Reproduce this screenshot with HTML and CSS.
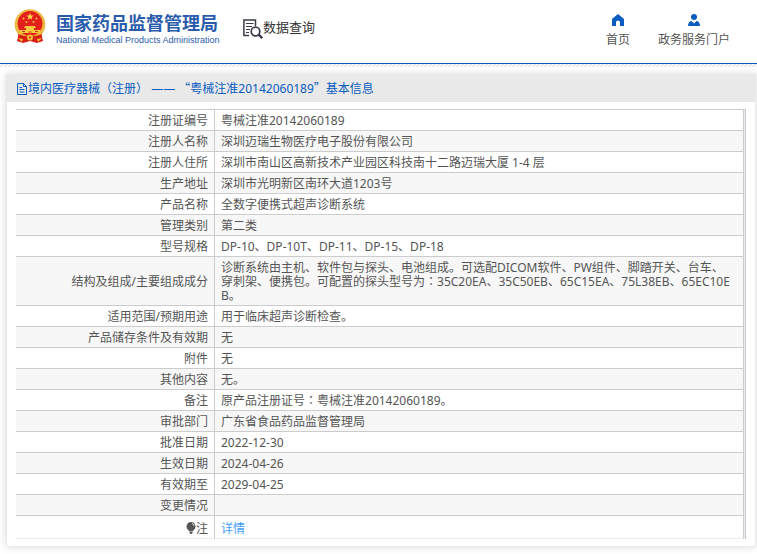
FILE: index.html
```html
<!DOCTYPE html>
<html lang="zh-CN">
  <head>
    <meta charset="UTF-8" />
    <meta name="viewport" content="width=device-width, initial-scale=1.0" />
    <title>国家药品监督管理局 - 数据查询</title>
    <link rel="stylesheet" href="styles.css">
  </head>
  <body>
    <header class="header">
      <div class="logo">
        <svg class="emblem" viewBox="0 0 32 34" aria-hidden="true">
          <path d="M5 24 L3 32 L9 34 L16 32 L23 34 L29 32 L27 24Z" fill="#d81e12" />
          <circle cx="16" cy="15.500" r="15.300" fill="#e9b13a" />
          <circle cx="16" cy="15.500" r="14" fill="none" stroke="#f6cf52" stroke-dasharray="2 1" />
          <circle cx="16" cy="14.500" r="12.400" fill="#e3201b" />
          <path d="M16 4l1 2.400 2.600.2-2 1.600.7 2.500-2.300-1.400-2.300 1.400.7-2.500-2-1.600 2.600-.2z" fill="#fbd84b" />
          <g fill="#f8c83e">
            <circle cx="9.500" cy="9.500" r="1" />
            <circle cx="12.500" cy="13" r="1" />
            <circle cx="19.500" cy="13" r="1" />
            <circle cx="22.500" cy="9.500" r="1" />
            <path d="M11 17h10l1 2H10zM12 19h8v2h-8zM6 21h20v3H6z" />
          </g>
          <path d="M8 22.500h3M14.500 23h3M21 22.500h3" stroke="#c9361b" />
          <path d="M4 25q12 5 24 0l-2 7-10-1-10 1z" fill="#d81e12" />
          <circle cx="16" cy="28.500" r="3" fill="#f2bd36" />
          <circle cx="16" cy="28.500" r="1" fill="#d81e12" />
          <path d="M4 29l5 1-1 3zM28 29l-5 1 1 3z" fill="#f2bd36" />
        </svg>
        <div class="logo-text">
          <div class="logo-cn">国家药品监督管理局</div>
          <div class="logo-en">National Medical Products Administration</div>
        </div>
      </div>
      <div class="data-query">
        <svg class="query-icon" viewBox="0 0 20 20" aria-hidden="true">
          <g fill="none" stroke="#393c47">
            <path d="M6 16.500H.9V1h11.600v6" stroke-width="1.500" />
            <path d="M3 4.500h7.500M3 7.500h6M3 10.500h4M3 13.500h3" stroke-width="1.200" />
            <circle cx="12.500" cy="12.500" r="4.300" stroke-width="1.700" />
            <path d="M15.600 15.600l3.600 3.600" stroke-width="2.300" />
          </g>
        </svg>
        <span>数据查询</span>
      </div>
      <nav class="nav">
        <a href="#">
          <svg viewBox="0 0 12 12" aria-hidden="true">
            <path d="M6 0l6 5v7H8V8.500a2 2 0 0 0-4 0V12H0V5z" fill="#0a5cbf" />
          </svg>
          首页
        </a>
        <a href="#">
          <svg viewBox="0 0 12 12" aria-hidden="true">
            <circle cx="6" cy="3" r="3" fill="#0a5cbf" />
            <path d="M0 12c0-3 1.500-5 3.500-5L6 9.500 8.500 7c2 0 3.500 2 3.500 5z" fill="#0a5cbf" />
          </svg>
          政务服务门户
        </a>
      </nav>
    </header>
    <div class="stripe"></div>

    <main class="card">
      <h1 class="card-title">
        <svg viewBox="0 0 11 12" aria-hidden="true">
          <path d="M1 .5h6L10 3.500v8H1zM7 .5v3h3M3 4.500h2.500M3 6.500h5M3 9h5" fill="none" stroke="#0a5cbf" />
        </svg>
        <span>境内医疗器械<span class="mid" lang="zh-TW">（</span>注册<span class="mid" lang="zh-TW">）</span> —— <span class="quote">“</span>粤械注准20142060189<span class="quote">”</span>基本信息</span>
      </h1>
      <div class="table-box">
        <table class="info">
          <tr><th scope="row">注册证编号</th><td>粤械注准20142060189</td></tr>
          <tr><th scope="row">注册人名称</th><td>深圳迈瑞生物医疗电子股份有限公司</td></tr>
          <tr><th scope="row">注册人住所</th><td>深圳市南山区高新技术产业园区科技南十二路迈瑞大厦 1-4 层</td></tr>
          <tr><th scope="row">生产地址</th><td>深圳市光明新区南环大道1203号</td></tr>
          <tr><th scope="row">产品名称</th><td>全数字便携式超声诊断系统</td></tr>
          <tr><th scope="row">管理类别</th><td>第二类</td></tr>
          <tr><th scope="row">型号规格</th><td>DP-10、DP-10T、DP-11、DP-15、DP-18</td></tr>
          <tr><th scope="row">结构及组成/主要组成成分</th><td>诊断系统由主机、软件包与探头、电池组成。可选配DICOM软件、PW组件、脚踏开关、台车、<br>穿刺架、便携包。可配置的探头型号为<span class="mid" lang="zh-TW">：</span>35C20EA、35C50EB、65C15EA、75L38EB、65EC10E<br>B。</td></tr>
          <tr><th scope="row">适用范围/预期用途</th><td>用于临床超声诊断检查。</td></tr>
          <tr><th scope="row">产品储存条件及有效期</th><td>无</td></tr>
          <tr><th scope="row">附件</th><td>无</td></tr>
          <tr><th scope="row">其他内容</th><td>无。</td></tr>
          <tr><th scope="row">备注</th><td>原产品注册证号<span class="mid" lang="zh-TW">：</span>粤械注准20142060189。</td></tr>
          <tr><th scope="row">审批部门</th><td>广东省食品药品监督管理局</td></tr>
          <tr><th scope="row">批准日期</th><td>2022-12-30</td></tr>
          <tr><th scope="row">生效日期</th><td>2024-04-26</td></tr>
          <tr><th scope="row">有效期至</th><td>2029-04-25</td></tr>
          <tr><th scope="row">变更情况</th><td></td></tr>
          <tr class="note">
            <th scope="row">
              <svg viewBox="0 0 10 12" aria-hidden="true">
                <path d="M5 0a4.500 4.500 0 0 1 3 7.800L6.500 9.500h-3L2 7.800A4.500 4.500 0 0 1 5 0zM3.500 10h3v1l-1 1h-1l-1-1z" fill="#555" />
                <path d="M6 1.500q2 .5 2 2.500" fill="none" stroke="#ddd" />
              </svg>注
            </th>
            <td><a href="#">详情</a></td>
          </tr>
        </table>
      </div>
    </main>
  </body>
</html>
```
FILE: styles.css
```css
body {
  margin: 0;
  font-family: "Noto Sans", "Noto Sans CJK SC", sans-serif;
  font-size: 12px;
  line-height: 14px;
  color: #555;
  background: #fff;
}

.header {
  display: flex;
  align-items: flex-start;
  height: 63px;
  border-bottom: 1px solid #0a5cbf;
}

.logo {
  display: flex;
  padding: 9px 0 0 14px;
}

.emblem {
  width: 32px;
  height: 34px;
}

.logo-text {
  width: 161px;
  margin-left: 10px;
  padding-top: 2px;
  color: #2b5bab;
  white-space: nowrap;
}

.logo-cn {
  font-family: "Noto Sans CJK SC", sans-serif;
  font-size: 18px;
  font-weight: bold;
  line-height: 22px;
}

.logo-en {
  font-family: "Liberation Sans", Arial, sans-serif;
  font-size: 9px;
}

.data-query {
  display: flex;
  align-items: center;
  margin: 15px 0 0 26px;
  font-size: 13px;
  line-height: 20px;
  color: #333;
  white-space: nowrap;
}

.query-icon {
  width: 20px;
  height: 20px;
  margin-top: 4px;
}

.nav {
  display: flex;
  gap: 28px;
  margin-left: auto;
  padding: 14px 27px 0 0;
}

.nav a {
  display: flex;
  flex-direction: column;
  align-items: center;
  gap: 7px;
  color: #555;
  text-decoration: none;
  white-space: nowrap;
}

.nav svg {
  width: 12px;
  height: 12px;
}

.stripe {
  height: 3px;
  background: linear-gradient(135deg, #fff 40%, #e2e2e2 40% 60%, #fff 60%);
  background-size: 4px 3px;
}

.card {
  margin: 7px 1px 7px 6px;
  padding-bottom: 7px;
  border: 1px solid #e9e9e9;
  border-top: none;
  box-shadow: 0 0 8px rgba(0, 0, 0, 0.15);
}

.card-title {
  display: flex;
  align-items: center;
  margin: 0;
  padding: 8px 10px 6px 9px;
  font-size: 12px;
  font-weight: normal;
  color: #0a5cbf;
  background: #e9e9e9;
}

.card-title svg {
  width: 12px;
  height: 12px;
}

.quote {
  font-family: "Noto Sans CJK SC", sans-serif;
  line-height: 0;
}

/* punctuation centred in its em box */
.mid {
  font-family: "Noto Sans CJK TC", sans-serif;
  line-height: 0;
}

.table-box {
  margin: 7px 9px 0;
  padding-right: 1px;
  border-top: 1px solid #ccc;
  border-right: 1px solid #ccc;
  background: #ebebf5;
}

.info {
  width: 100%;
  border-spacing: 0;
  background: #fff;
}

.info th,
.info td {
  padding: 4px 6px 2px;
  height: 14px;
  border-right: 1px solid #ccc;
  border-bottom: 1px solid #ccc;
}

.info th {
  width: 186px;
  font-weight: normal;
  text-align: right;
}

.info td {
  word-break: break-all;
}

.info tr:nth-child(even) {
  background: #f7f7f7;
}

.info .note th,
.info .note td {
  padding: 6px 6px 2px;
  border-bottom-color: #ebebf5;
}

.note svg {
  width: 10px;
  height: 12px;
  vertical-align: -1px;
}

.note a {
  color: #409eff;
  text-decoration: none;
}
```
